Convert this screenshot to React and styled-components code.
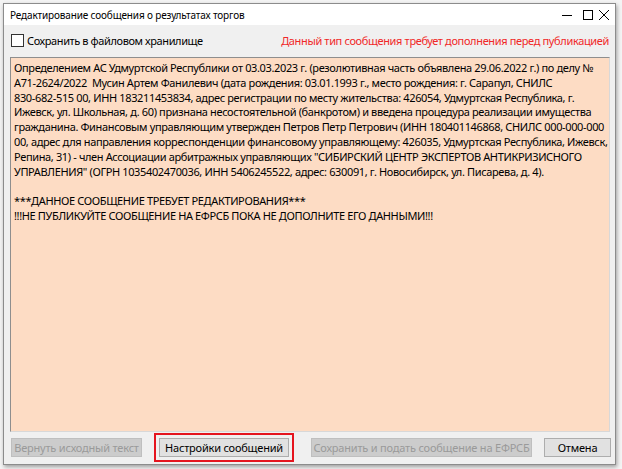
import React from 'react';
import styled, { createGlobalStyle } from 'styled-components';

const GlobalStyle = createGlobalStyle`
  html, body {
    margin: 0;
    padding: 0;
    background: #f4f4f4;
  }
  body {
    font-family: "Segoe UI", "Noto Sans", "Open Sans", sans-serif;
    overflow: hidden;
  }
`;

const Screen = styled.div`
  width: 622px;
  height: 469px;
  padding: 3px 0 0 3px;
  box-sizing: border-box;
`;

const Window = styled.div`
  width: 613px;
  height: 462px;
  display: flex;
  flex-direction: column;
  background: #f0f0f0;
  border: 1px solid #8c8c8c;
  box-sizing: border-box;
  box-shadow: 1px 2px 4px rgba(0, 0, 0, 0.35);
`;

const TitleBar = styled.div`
  height: 21px;
  flex: none;
  display: flex;
  align-items: center;
  background: #ffffff;
  padding: 0 6px 0 6px;
`;

const Title = styled.div`
  flex: 1;
  font-size: 10px;
  color: #000;
  letter-spacing: -0.15px;
  white-space: nowrap;
`;

const Controls = styled.div`
  display: flex;
  align-items: center;
`;

const ControlIcon = styled.svg`
  display: block;
  margin-left: ${p => p.ml || 0}px;
`;

const TopRow = styled.div`
  height: 31px;
  flex: none;
  display: flex;
  align-items: center;
  padding: 0 6px 0 7px;
  white-space: nowrap;
`;

const CheckLabel = styled.label`
  display: flex;
  align-items: center;
  gap: 3px;
  font-size: 11px;
  letter-spacing: -0.4px;
  color: #000;
`;

const CheckBox = styled.span`
  width: 11px;
  height: 11px;
  border: 1px solid #333;
  background: #fff;
  display: inline-block;
`;

const Warning = styled.div`
  margin-left: auto;
  font-size: 11px;
  letter-spacing: -0.35px;
  color: #f02828;
`;

const Editor = styled.div`
  flex: 1;
  margin: 1px 5px 0 6px;
  background: #fddcc4;
  border: 1px solid #8e8e8e;
  border-right-color: #d8d8d8;
  border-bottom-color: #d8d8d8;
  padding: 3px 3px;
  font-size: 11px;
  letter-spacing: -0.36px;
  line-height: 14.8px;
  color: #000;
  white-space: pre;
  overflow: hidden;
`;

const Line = styled.div`
  min-height: 14.8px;
`;

const Footer = styled.div`
  height: 31px;
  flex: none;
  display: flex;
  align-items: center;
  padding: 0 4px 1px 7px;
`;

const Button = styled.div`
  width: ${p => p.w}px;
  height: 19px;
  box-sizing: border-box;
  display: flex;
  align-items: center;
  justify-content: center;
  white-space: nowrap;
  font-size: 11px;
  letter-spacing: -0.2px;
  margin-left: ${p => p.ml || 0}px;
  background: ${p => (p.disabled ? '#cccccc' : '#e1e1e1')};
  border: 1px solid ${p => (p.disabled ? '#bfbfbf' : '#adadad')};
  color: ${p => (p.disabled ? '#9a9a9a' : '#000')};
`;

const Highlight = styled.div`
  margin-left: ${p => p.ml || 0}px;
  border: 2px solid #e5141e;
  padding: 3px;
`;

const lines = [
  'Определением АС Удмуртской Республики от 03.03.2023 г. (резолютивная часть объявлена 29.06.2022 г.) по делу №',
  'А71-2624/2022  Мусин Артем Фанилевич (дата рождения: 03.01.1993 г., место рождения: г. Сарапул, СНИЛС',
  '830-682-515 00, ИНН 183211453834, адрес регистрации по месту жительства: 426054, Удмуртская Республика, г.',
  'Ижевск, ул. Школьная, д. 60) признана несостоятельной (банкротом) и введена процедура реализации имущества',
  'гражданина. Финансовым управляющим утвержден Петров Петр Петрович (ИНН 180401146868, СНИЛС 000-000-000',
  '00, адрес для направления корреспонденции финансовому управляющему: 426035, Удмуртская Республика, Ижевск,',
  'Репина, 31) - член Ассоциации арбитражных управляющих "СИБИРСКИЙ ЦЕНТР ЭКСПЕРТОВ АНТИКРИЗИСНОГО',
  'УПРАВЛЕНИЯ" (ОГРН 1035402470036, ИНН 5406245522, адрес: 630091, г. Новосибирск, ул. Писарева, д. 4).',
  '',
  '***ДАННОЕ СООБЩЕНИЕ ТРЕБУЕТ РЕДАКТИРОВАНИЯ***',
  '!!!НЕ ПУБЛИКУЙТЕ СООБЩЕНИЕ НА ЕФРСБ ПОКА НЕ ДОПОЛНИТЕ ЕГО ДАННЫМИ!!!',
];

const App = () => (
  <Screen>
    <GlobalStyle />
    <Window>
      <TitleBar>
        <Title>Редактирование сообщения о результатах торгов</Title>
        <Controls>
          <ControlIcon width="10" height="10" viewBox="0 0 10 10">
            <path d="M0 5.5h10" stroke="#000" strokeWidth="1" />
          </ControlIcon>
          <ControlIcon width="10" height="10" viewBox="0 0 10 10" ml={11}>
            <rect x="0.5" y="0.5" width="9" height="9" fill="none" stroke="#000" strokeWidth="1" />
          </ControlIcon>
          <ControlIcon width="10" height="10" viewBox="0 0 10 10" ml={6}>
            <path d="M0 0L10 10M10 0L0 10" stroke="#000" strokeWidth="1" />
          </ControlIcon>
        </Controls>
      </TitleBar>

      <TopRow>
        <CheckLabel>
          <CheckBox />
          Сохранить в файловом хранилище
        </CheckLabel>
        <Warning>Данный тип сообщения требует дополнения перед публикацией</Warning>
      </TopRow>

      <Editor>
        {lines.map((text, i) => (
          <Line key={i}>{text}</Line>
        ))}
      </Editor>

      <Footer>
        <Button disabled w={131}>Вернуть исходный текст</Button>
        <Highlight ml={12}>
          <Button w={130}>Настройки сообщений</Button>
        </Highlight>
        <Button disabled w={221} ml={17}>Сохранить и подать сообщение на ЕФРСБ</Button>
        <Button w={67} ml={12}>Отмена</Button>
      </Footer>
    </Window>
  </Screen>
);

export default App;
